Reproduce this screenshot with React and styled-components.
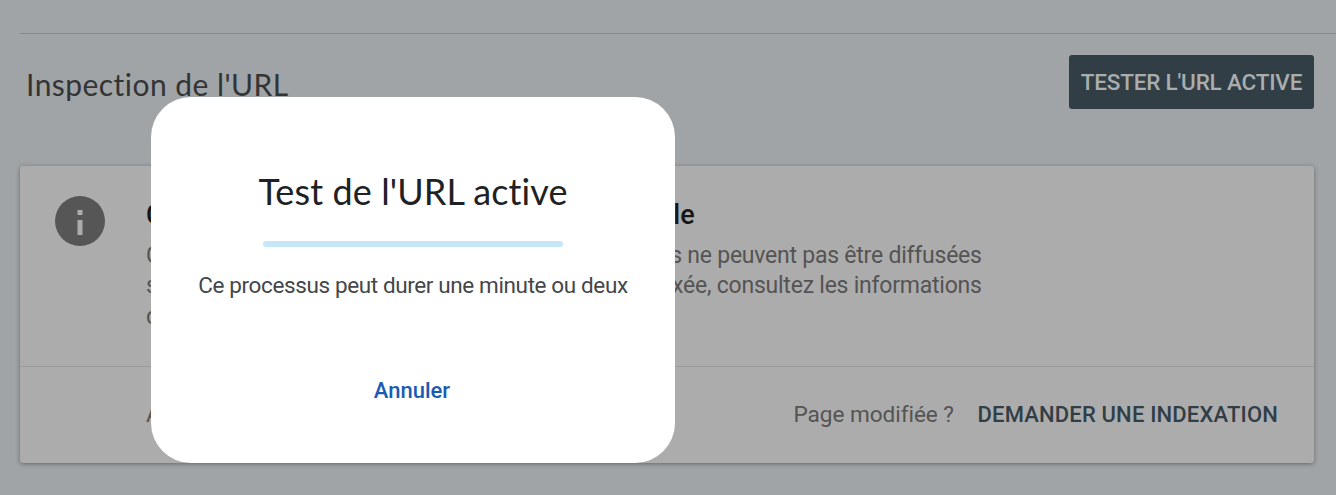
import React from "react";
import styled, { createGlobalStyle } from "styled-components";

const Global = createGlobalStyle`
  html, body { margin: 0; padding: 0; height: 100%; background: #a0a4a7; overflow: hidden; }
  #root { height: 100%; }
  * { box-sizing: border-box; }
`;

const Page = styled.div`
  position: relative;
  width: 1336px;
  height: 495px;
  overflow: hidden;
  background: #a0a4a7;
  font-family: Roboto, "Liberation Sans", sans-serif;
  padding: 33px 22px 0 20px;
`;

const TopRule = styled.div`
  height: 1px;
  margin-right: -22px;
  background: #84888b;
`;

const Header = styled.header`
  display: flex;
  align-items: flex-start;
  justify-content: space-between;
  height: 132px;
  padding: 21px 0 0 7px;
`;

const PageTitle = styled.h1`
  margin: 12px 0 0 -1px;
  font-family: Lato, "Noto Sans", sans-serif;
  font-size: 30px;
  font-weight: 400;
  line-height: 34px;
  letter-spacing: 0.45px;
  color: #333435;
`;

const TestButton = styled.button`
  width: 245px;
  height: 54px;
  padding: 0;
  border: 0;
  border-radius: 3px;
  background: #313e46;
  color: #a9adad;
  font-family: inherit;
  font-size: 22.5px;
  font-weight: 500;
  letter-spacing: -0.2px;
  white-space: nowrap;
`;

const Card = styled.section`
  height: 297px;
  border-radius: 3px;
  background: #acacac;
  box-shadow: 0 1px 4px rgba(50, 54, 58, 0.55);
  display: flex;
  flex-direction: column;
`;

const CardBody = styled.div`
  height: 201px;
  display: flex;
  gap: 41px;
  padding: 30px 0 0 35px;
  border-bottom: 1px solid #9b9b9b;
`;

const InfoIcon = styled.svg`
  width: 50px;
  height: 50px;
  flex: none;
`;

const CardCopy = styled.div`
  padding-top: 2px;
`;

const CardTitle = styled.h2`
  margin: 0 0 8.5px;
  font-size: 27px;
  font-weight: 500;
  line-height: 34px;
  letter-spacing: 0.25px;
  color: #161616;
  white-space: nowrap;
`;

const CardText = styled.p`
  margin: 0;
  font-size: 23px;
  line-height: 30.5px;
  letter-spacing: -0.23px;
  color: #545454;
  white-space: nowrap;
`;

const CardFooter = styled.div`
  flex: 1;
  display: flex;
  align-items: center;
  justify-content: space-between;
  padding: 0 36px 1px 126px;
  font-size: 22.6px;
  letter-spacing: -0.05px;
  color: #545454;
`;

const FooterActions = styled.div`
  display: flex;
  align-items: center;
  gap: 23.5px;
`;

const IndexLink = styled.span`
  font-size: 22px;
  font-weight: 500;
  letter-spacing: 0.17px;
  color: #313e46;
`;

const Dialog = styled.div`
  position: absolute;
  left: 151px;
  top: 97px;
  width: 524px;
  height: 366px;
  border-radius: 40px;
  background: #fff;
  display: flex;
  flex-direction: column;
  align-items: center;
  padding-top: 72px;
`;

const DialogTitle = styled.h2`
  margin: 0;
  font-family: Lato, "Noto Sans", sans-serif;
  font-size: 36px;
  font-weight: 400;
  line-height: 44px;
  letter-spacing: 0.1px;
  color: #202124;
`;

const Progress = styled.div`
  width: 300px;
  height: 6px;
  margin-top: 28px;
  border-radius: 3px;
  background: #c6e6fa;
`;

const DialogText = styled.p`
  margin: 23px 0 0;
  font-size: 22.5px;
  line-height: 30px;
  letter-spacing: -0.38px;
  color: #444649;
  white-space: nowrap;
`;

const CancelButton = styled.button`
  margin-top: 76px;
  margin-left: -2px;
  padding: 0;
  border: 0;
  background: none;
  font-family: inherit;
  font-size: 22px;
  font-weight: 500;
  line-height: 30px;
  color: #1a5cb4;
`;

export default function App() {
  return (
    <Page>
      <Global />
      <TopRule />
      <Header>
        <PageTitle>Inspection de l'URL</PageTitle>
        <TestButton>TESTER L'URL ACTIVE</TestButton>
      </Header>
      <Card>
        <CardBody>
          <InfoIcon viewBox="0 0 50 50">
            <circle cx="25" cy="25" r="25" fill="#565656" />
            <rect x="22.5" y="24" width="5" height="15" fill="#acacac" />
            <rect x="22.5" y="14" width="5" height="5" fill="#acacac" />
          </InfoIcon>
          <CardCopy>
            <CardTitle>Cette page n'est pas sur Google, ni indexable</CardTitle>
            <CardText>
              Cette page n'est pas indexée. Les pages non indexées ne peuvent pas être diffusées
              <br />
              sur Google. Pour savoir pourquoi elle n'a pas été indexée, consultez les informations
              <br />
              d'indexation ci-dessous.
            </CardText>
          </CardCopy>
        </CardBody>
        <CardFooter>
          <span>Afficher la page explorée</span>
          <FooterActions>
            <span>Page modifiée ?</span>
            <IndexLink>DEMANDER UNE INDEXATION</IndexLink>
          </FooterActions>
        </CardFooter>
      </Card>
      <Dialog>
        <DialogTitle>Test de l'URL active</DialogTitle>
        <Progress />
        <DialogText>Ce processus peut durer une minute ou deux</DialogText>
        <CancelButton>Annuler</CancelButton>
      </Dialog>
    </Page>
  );
}
